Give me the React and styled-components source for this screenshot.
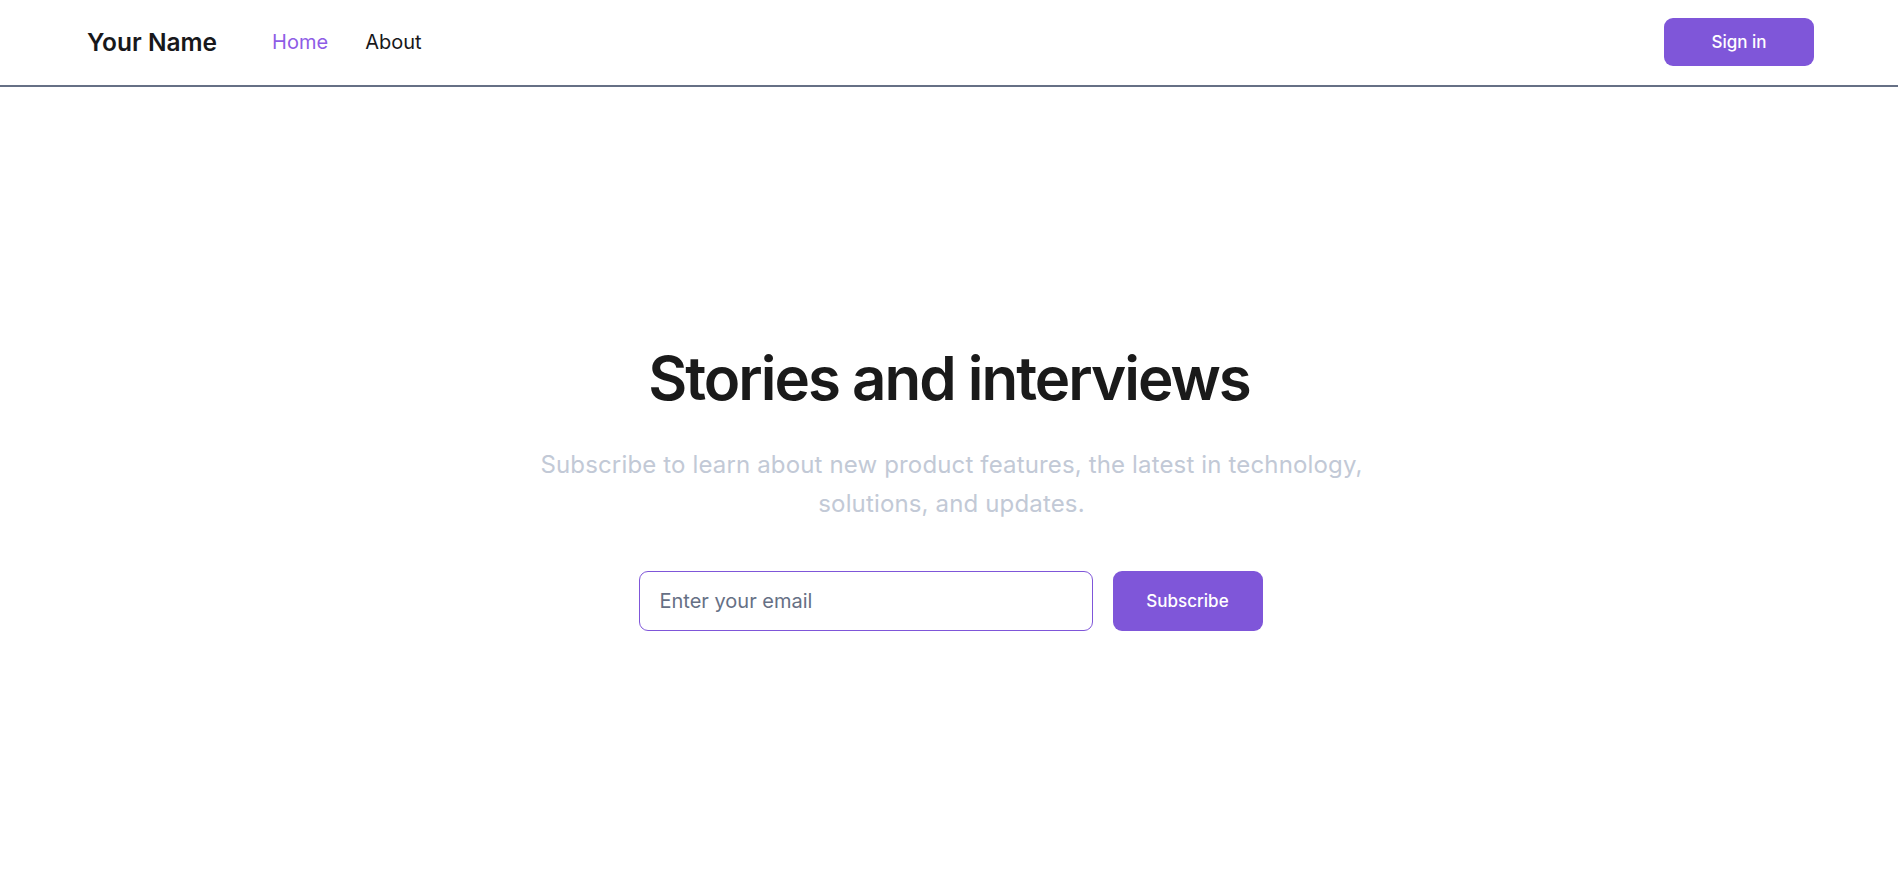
import React from "react";
import styled, { createGlobalStyle } from "styled-components";

const GlobalStyle = createGlobalStyle`
  *, *::before, *::after { box-sizing: border-box; }
  html, body { margin: 0; padding: 0; background: #ffffff; }
  body {
    font-family: Inter, "Noto Sans", "Liberation Sans", sans-serif;
    color: #1a1a1a;
    -webkit-font-smoothing: antialiased;
  }
`;

const Page = styled.div`
  min-height: 100vh;
  display: flex;
  flex-direction: column;
  background: #ffffff;
`;

const Header = styled.header`
  height: 87px;
  border-bottom: 2px solid #667085;
  display: flex;
  align-items: center;
  justify-content: space-between;
  padding: 0 84px 1px 87px;
`;

const Left = styled.div`
  display: flex;
  align-items: center;
  gap: 55px;
`;

const Brand = styled.a`
  font-size: 24.5px;
  font-weight: 600;
  color: #18181b;
  text-decoration: none;
`;

const Nav = styled.nav`
  display: flex;
  align-items: center;
  gap: 37px;
`;

const NavLink = styled.a`
  font-size: 20px;
  font-weight: 400;
  text-decoration: none;
  color: ${(p) => (p.$active ? "#8e5ce6" : "#18181b")};
`;

const PrimaryButton = styled.button`
  width: ${(p) => p.$width}px;
  height: ${(p) => p.$height}px;
  border: none;
  border-radius: 9px;
  background: #7f56d9;
  color: #ffffff;
  font-family: inherit;
  font-size: 17px;
  font-weight: 500;
  cursor: pointer;
`;

const Main = styled.main`
  flex: 1;
  display: flex;
  flex-direction: column;
  align-items: center;
  justify-content: center;
  padding-top: 11px;
  text-align: center;
`;

const Title = styled.h1`
  margin: 0;
  font-size: 60px;
  line-height: 60px;
  font-weight: 600;
  letter-spacing: -2px;
  color: #1a1a1a;
`;

const Subtitle = styled.p`
  margin: 37px 0 0;
  padding-left: 5px;
  max-width: 895px;
  font-size: 24px;
  line-height: 39px;
  font-weight: 400;
  letter-spacing: 0.15px;
  color: #c2c9d6;
`;

const Form = styled.form`
  margin-top: 48px;
  padding-left: 3px;
  display: flex;
  align-items: center;
  gap: 20px;
`;

const EmailInput = styled.input`
  width: 454px;
  height: 60px;
  padding: 0 20px;
  border: 1px solid #7f56d9;
  border-radius: 9px;
  font-family: inherit;
  font-size: 20px;
  color: #1a1a1a;
  outline: none;
  &::placeholder { color: #667085; }
`;

export default function App() {
  return (
    <>
      <GlobalStyle />
      <Page>
        <Header>
          <Left>
            <Brand href="#">Your Name</Brand>
            <Nav>
              <NavLink href="#" $active>Home</NavLink>
              <NavLink href="#">About</NavLink>
            </Nav>
          </Left>
          <PrimaryButton $width={150} $height={48}>Sign in</PrimaryButton>
        </Header>
        <Main>
          <Title>Stories and interviews</Title>
          <Subtitle>
            Subscribe to learn about new product features, the latest in technology, solutions, and updates.
          </Subtitle>
          <Form onSubmit={(e) => e.preventDefault()}>
            <EmailInput type="email" placeholder="Enter your email" />
            <PrimaryButton type="submit" $width={150} $height={60}>Subscribe</PrimaryButton>
          </Form>
        </Main>
      </Page>
    </>
  );
}
